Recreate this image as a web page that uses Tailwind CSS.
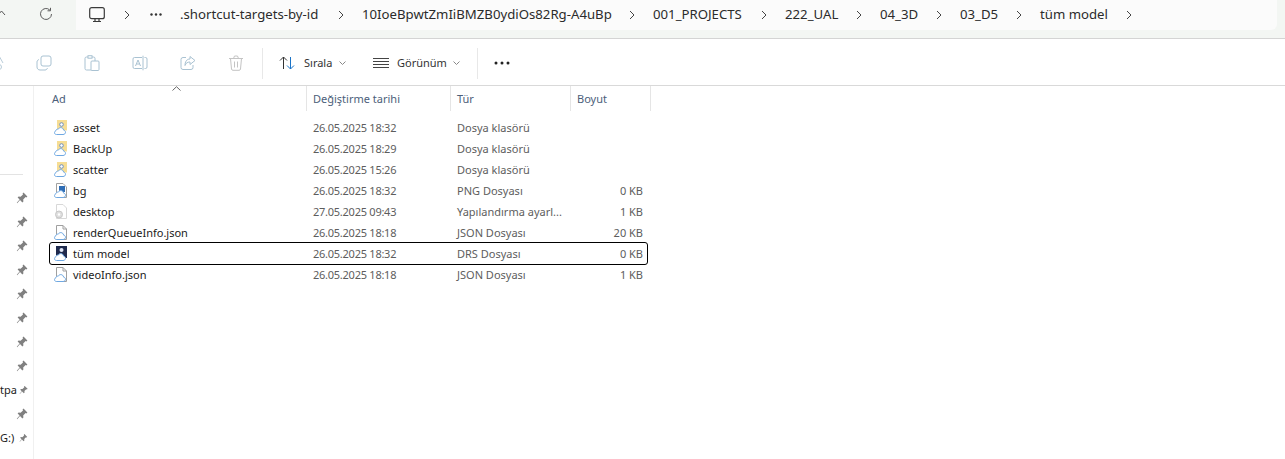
<!DOCTYPE html>
<html lang="tr">
<head>
    <meta charset="UTF-8">
    <title>tüm model</title>
    <script src="https://cdn.jsdelivr.net/npm/@tailwindcss/browser@4"></script>
</head>
<body class="bg-white h-[459px] w-[1285px] overflow-hidden font-['Noto_Sans','Open_Sans',sans-serif]">
    <svg class="absolute w-0 h-0">
        <defs>
            <path id="cloud" d="M2.500 14.500h6.500c1.500 0 2.500-1 2.500-2.200 0-1.200-.8-2-1.900-2.200-.2-1.500-1.400-2.500-2.800-2.500-1.100 0-2 .6-2.500 1.500-1.400-.2-2.500.7-2.600 2C1 11.100.5 11.900.5 12.800c0 1 .9 1.700 2 1.700z" fill="#fff" stroke="#6fa8e2"/>
        </defs>
        <symbol id="pin" viewBox="0 0 12 12"><path d="M7.500.6 11.400 4.500 10.500 5.400 9.600 5 7.200 7.400 7.400 9.400 6.400 10.400 4 8 1.200 11.200.8 10.800 3.600 7.600 1.600 5.600 2.600 4.600 4.600 4.800 7 2.400 6.600 1.500z" fill="#808080"/></symbol>
        <symbol id="chev" viewBox="0 0 8 12"><path d="M2 2l4 4-4 4" fill="none" stroke="#444"/></symbol>
        <symbol id="folder" viewBox="0 0 14 15"><path d="M3 0h10v10.500H3z" fill="#f6dd94"/><circle cx="7.500" cy="4.500" r="1.800" fill="#fff" stroke="#6d8fc0"/><use href="#cloud"/></symbol>
        <symbol id="doc" viewBox="0 0 14 15"><path d="M2.500.5h6.500l3.500 3.500v10.500h-10z" fill="#fff" stroke="#a0a0a0"/><path d="M9 .5v3.500h3.500" fill="none" stroke="#a0a0a0"/><use href="#cloud"/></symbol>
    </svg>

    <!-- adres cubugu -->
    <div class="h-[39px] bg-[#f3f6f3] border-b border-[#d4d4d4] flex">
        <div class="w-[76px] shrink-0 flex items-center relative">
            <svg class="absolute -left-[3px] top-[10px] w-[9px] h-[6px]" viewBox="0 0 9 6"><path d="M1 5l3.500-4L8 5" fill="none" stroke="#555"/></svg>
            <svg class="absolute left-[39px] top-[7px] w-[14px] h-[14px]" viewBox="0 0 14 14"><path d="M12.500 7A5.500 5.500 0 1 1 10.800 3M11.500 .8v3h-3" fill="none" stroke="#5c5c5c"/></svg>
        </div>
        <div class="w-[1201px] h-[30px] pb-[1px] bg-[#fbfbfb] rounded-br-md flex items-center text-[13.2px] text-[#2b2b2b] whitespace-nowrap">
            <svg class="ml-[13px] w-[16px] h-[16px] shrink-0" viewBox="0 0 16 16"><rect x=".7" y=".7" width="14.600" height="11" rx="2" fill="none" stroke="#3a3a3a" stroke-width="1.200"/><path d="M4 14.500h8M6 12v2M10 12v2" stroke="#3a3a3a" stroke-width="1.200"/></svg>
            <svg class="ml-[18px] w-[8px] h-[12px] shrink-0"><use href="#chev"/></svg>
            <svg class="ml-[19px] w-[12px] h-[3px] shrink-0" viewBox="0 0 12 3" fill="#333"><circle cx="1.500" cy="1.500" r="1.200"/><circle cx="6" cy="1.500" r="1.200"/><circle cx="10.500" cy="1.500" r="1.200"/></svg>
            <span class="ml-[18px] w-[140px]">.shortcut-targets-by-id</span>
            <svg class="ml-[17px] w-[8px] h-[12px] shrink-0"><use href="#chev"/></svg>
            <span class="ml-[17px] w-[249px]">10IoeBpwtZmIiBMZB0ydiOs82Rg-A4uBp</span>
            <svg class="ml-[17px] w-[8px] h-[12px] shrink-0"><use href="#chev"/></svg>
            <span class="ml-[17px] w-[90px]">001_PROJECTS</span>
            <svg class="ml-[17px] w-[8px] h-[12px] shrink-0"><use href="#chev"/></svg>
            <span class="ml-[17px] w-[53px]">222_UAL</span>
            <svg class="ml-[17px] w-[8px] h-[12px] shrink-0"><use href="#chev"/></svg>
            <span class="ml-[17px] w-[38px]">04_3D</span>
            <svg class="ml-[17px] w-[8px] h-[12px] shrink-0"><use href="#chev"/></svg>
            <span class="ml-[17px] w-[38px]">03_D5</span>
            <svg class="ml-[17px] w-[8px] h-[12px] shrink-0"><use href="#chev"/></svg>
            <span class="ml-[17px] w-[68px]">tüm model</span>
            <svg class="ml-[17px] w-[8px] h-[12px] shrink-0"><use href="#chev"/></svg>
        </div>
    </div>

    <!-- arac cubugu -->
    <div class="h-[47px] pt-[2px] border-b border-[#d9d9d9] flex items-center relative text-[11px] text-[#333]">
        <svg class="absolute -left-[3px] top-[14px] w-[8px] h-[18px]" viewBox="0 0 8 18"><circle cx="2" cy="14" r="2.500" fill="none" stroke="#b9ccd9"/><path d="M1 1l5 9" stroke="#b9ccd9"/></svg>
        <div class="ml-[36px] flex gap-[32px] items-center">
            <svg class="w-[16px] h-[16px]" viewBox="0 0 16 16" fill="none" stroke="#a9c2d2"><rect x="5" y="1" width="10" height="10" rx="2"/><path d="M3 4.500c-1 .4-2 1-2 2.500v5c0 1.700 1.300 3 3 3h5c1.500 0 2.100-1 2.500-2"/></svg>
            <svg class="w-[16px] h-[16px]" viewBox="0 0 16 16" fill="none" stroke="#a9c2d2"><rect x="1" y="2" width="10" height="13" rx="1.500"/><rect x="4" y=".7" width="4" height="2.500" fill="#fff"/><rect x="7" y="6" width="8" height="9.500" rx="1" fill="#fff"/></svg>
            <svg class="w-[16px] h-[16px]" viewBox="0 0 16 16" fill="none" stroke="#a9c2d2"><path d="M10 2.500H2.500A1.500 1.500 0 0 0 1 4v8a1.500 1.500 0 0 0 1.500 1.500H10M12.500 2.500h1A1.500 1.500 0 0 1 15 4v8a1.500 1.500 0 0 1-1.500 1.500h-1M11 .7v14.600M3.500 11 6 5l2.500 6M4.500 9h3"/></svg>
            <svg class="w-[16px] h-[16px]" viewBox="0 0 16 16" fill="none" stroke="#a9c2d2"><path d="M6 2.500H3A2 2 0 0 0 1 4.500v8A2 2 0 0 0 3 14.500h8a2 2 0 0 0 2-2V10"/><path d="M10 1.500 15 5.500 10 9.500V7C7.500 7 6 8 5 10.500 5 7 6.500 4 10 4z"/></svg>
            <svg class="w-[16px] h-[16px]" viewBox="0 0 16 16" fill="none" stroke="#c4c4c4"><path d="M1 3.500h14M5.500 3.500 6.500 1h3l1 2.500M2.500 3.500l1 10.500a1.500 1.500 0 0 0 1.500 1.300h6a1.500 1.500 0 0 0 1.500-1.300l1-10.500M6.500 6.500v6M9.500 6.500v6"/></svg>
        </div>
        <div class="ml-[18px] w-px h-[31px] bg-[#e8e8e8]"></div>
        <svg class="ml-[16px] w-[16px] h-[16px]" viewBox="0 0 16 16" fill="none"><path d="M4.500 14V2M1 5.500 4.500 2 8 5.500" stroke="#333"/><path d="M11.500 2v12M8 10.500l3.500 3.500 3.500-3.500" stroke="#1a73c7"/></svg>
        <span class="ml-[9px] w-[29px]">Sırala</span>
        <svg class="ml-[6px] w-[7px] h-[4px]" viewBox="0 0 7 4"><path d="M.5.500 3.500 3.500 6.500.500" fill="none" stroke="#888"/></svg>
        <svg class="ml-[27px] w-[16px] h-[12px]" viewBox="0 0 16 12"><path d="M0 1.500h16M0 4.500h16M0 7.500h16M0 10.500h16" stroke="#444"/></svg>
        <span class="ml-[8px] w-[50px]">Görünüm</span>
        <svg class="ml-[6px] w-[7px] h-[4px]" viewBox="0 0 7 4"><path d="M.5.500 3.500 3.500 6.500.500" fill="none" stroke="#888"/></svg>
        <div class="ml-[17px] w-px h-[31px] bg-[#e8e8e8]"></div>
        <svg class="ml-[16px] w-[16px] h-[4px]" viewBox="0 0 16 4" fill="#222"><circle cx="2" cy="2" r="1.500"/><circle cx="8" cy="2" r="1.500"/><circle cx="14" cy="2" r="1.500"/></svg>
    </div>

    <div class="flex h-[373px]">
        <!-- kenar cubugu -->
        <aside class="w-[34px] shrink-0 border-r border-[#f0f0f0] text-[11px] text-[#222] overflow-hidden">
            <div class="mt-[88px] w-[23px] h-px bg-[#e3e3e3]"></div>
            <div class="mt-[11px] flex flex-col">
                <div class="h-[24px] flex items-center justify-end pr-[5px]"><svg class="w-[12px] h-[12px]"><use href="#pin"/></svg></div>
                <div class="h-[24px] flex items-center justify-end pr-[5px]"><svg class="w-[12px] h-[12px]"><use href="#pin"/></svg></div>
                <div class="h-[24px] flex items-center justify-end pr-[5px]"><svg class="w-[12px] h-[12px]"><use href="#pin"/></svg></div>
                <div class="h-[24px] flex items-center justify-end pr-[5px]"><svg class="w-[12px] h-[12px]"><use href="#pin"/></svg></div>
                <div class="h-[24px] flex items-center justify-end pr-[5px]"><svg class="w-[12px] h-[12px]"><use href="#pin"/></svg></div>
                <div class="h-[24px] flex items-center justify-end pr-[5px]"><svg class="w-[12px] h-[12px]"><use href="#pin"/></svg></div>
                <div class="h-[24px] flex items-center justify-end pr-[5px]"><svg class="w-[12px] h-[12px]"><use href="#pin"/></svg></div>
                <div class="h-[24px] flex items-center justify-end pr-[5px]"><svg class="w-[12px] h-[12px]"><use href="#pin"/></svg></div>
                <div class="h-[24px] flex items-center justify-end gap-[2px] pr-[5px]"><span>tpa</span><svg class="w-[12px] h-[12px]"><use href="#pin"/></svg></div>
                <div class="h-[24px] flex items-center justify-end pr-[5px]"><svg class="w-[12px] h-[12px]"><use href="#pin"/></svg></div>
                <div class="h-[24px] flex items-center justify-end gap-[5px] pr-[5px]"><span>G:)</span><svg class="w-[12px] h-[12px]"><use href="#pin"/></svg></div>
            </div>
        </aside>

        <!-- dosya listesi -->
        <main class="flex-1 text-[11px]">
            <div class="h-[25px] flex relative text-[#4c607a]">
                <svg class="absolute left-[138px] top-0 w-[9px] h-[5px]" viewBox="0 0 9 5"><path d="M.5 4.500 4.500.7 8.500 4.500" fill="none" stroke="#666"/></svg>
                <div class="w-[273px] pt-[2px] pl-[18px] flex items-center border-r border-[#e5e5e5]">Ad</div>
                <div class="w-[144px] pt-[2px] pl-[6px] flex items-center border-r border-[#e5e5e5]">Değiştirme tarihi</div>
                <div class="w-[120px] pt-[2px] pl-[6px] flex items-center border-r border-[#e5e5e5]">Tür</div>
                <div class="w-[80px] pt-[2px] pl-[6px] flex items-center border-r border-[#e5e5e5]">Boyut</div>
            </div>
            <div class="mt-[6px] ml-[16px] w-[597px] text-[#5d5d5d]">
                <div class="h-[21px] pt-[2px] flex items-center"><svg class="ml-[4px] -mt-[3px] w-[14px] h-[15px]"><use href="#folder"/></svg><span class="ml-[5px] w-[240px] text-[#1a1a1a]">asset</span><span class="w-[144px] tracking-[-0.25px]">26.05.2025 18:32</span><span class="w-[120px]">Dosya klasörü</span></div>
                <div class="h-[21px] pt-[2px] flex items-center"><svg class="ml-[4px] -mt-[3px] w-[14px] h-[15px]"><use href="#folder"/></svg><span class="ml-[5px] w-[240px] text-[#1a1a1a]">BackUp</span><span class="w-[144px] tracking-[-0.25px]">26.05.2025 18:29</span><span class="w-[120px]">Dosya klasörü</span></div>
                <div class="h-[21px] pt-[2px] flex items-center"><svg class="ml-[4px] -mt-[3px] w-[14px] h-[15px]"><use href="#folder"/></svg><span class="ml-[5px] w-[240px] text-[#1a1a1a]">scatter</span><span class="w-[144px] tracking-[-0.25px]">26.05.2025 15:26</span><span class="w-[120px]">Dosya klasörü</span></div>
                <div class="h-[21px] pt-[2px] flex items-center"><svg class="ml-[4px] -mt-[3px] w-[14px] h-[15px]" viewBox="0 0 14 15"><path d="M2.500.5h6.500l3.500 3.500v10.500h-10z" fill="#fff" stroke="#a0a0a0"/><rect x="5" y="3" width="6" height="6" fill="#2f6db5"/><use href="#cloud"/></svg><span class="ml-[5px] w-[240px] text-[#1a1a1a]">bg</span><span class="w-[144px] tracking-[-0.25px]">26.05.2025 18:32</span><span class="w-[120px]">PNG Dosyası</span><span class="w-[66px] text-right">0 KB</span></div>
                <div class="h-[21px] pt-[2px] flex items-center"><svg class="ml-[4px] -mt-[3px] w-[14px] h-[15px]" viewBox="0 0 14 15"><path d="M2.500.5h6.500l3.500 3.500v10.500h-10z" fill="#fff" stroke="#d8d8d8"/><circle cx="5" cy="10.500" r="3.500" fill="#dedede" stroke="#c8c8c8"/><circle cx="5" cy="10.500" r="1.200" fill="#fff"/></svg><span class="ml-[5px] w-[240px] text-[#1a1a1a]">desktop</span><span class="w-[144px] tracking-[-0.25px]">27.05.2025 09:43</span><span class="w-[120px]">Yapılandırma ayarl...</span><span class="w-[66px] text-right">1 KB</span></div>
                <div class="h-[21px] pt-[2px] flex items-center"><svg class="ml-[4px] -mt-[3px] w-[14px] h-[15px]"><use href="#doc"/></svg><span class="ml-[5px] w-[240px] text-[#1a1a1a]">renderQueueInfo.json</span><span class="w-[144px] tracking-[-0.25px]">26.05.2025 18:18</span><span class="w-[120px]">JSON Dosyası</span><span class="w-[66px] text-right">20 KB</span></div>
                <div class="h-[21px] pt-[2px] flex items-center outline outline-1 outline-black rounded-[2px]"><svg class="ml-[4px] -mt-[3px] w-[14px] h-[15px]" viewBox="0 0 14 15"><rect x="2" y="0" width="11" height="12" fill="#1f2a4d"/><circle cx="7.500" cy="4" r="2" fill="#dfe6f5"/><use href="#cloud"/></svg><span class="ml-[5px] w-[240px] text-[#1a1a1a]">tüm model</span><span class="w-[144px] tracking-[-0.25px]">26.05.2025 18:32</span><span class="w-[120px]">DRS Dosyası</span><span class="w-[66px] text-right">0 KB</span></div>
                <div class="h-[21px] pt-[2px] flex items-center"><svg class="ml-[4px] -mt-[3px] w-[14px] h-[15px]"><use href="#doc"/></svg><span class="ml-[5px] w-[240px] text-[#1a1a1a]">videoInfo.json</span><span class="w-[144px] tracking-[-0.25px]">26.05.2025 18:18</span><span class="w-[120px]">JSON Dosyası</span><span class="w-[66px] text-right">1 KB</span></div>
            </div>
        </main>
    </div>
</body>
</html>
